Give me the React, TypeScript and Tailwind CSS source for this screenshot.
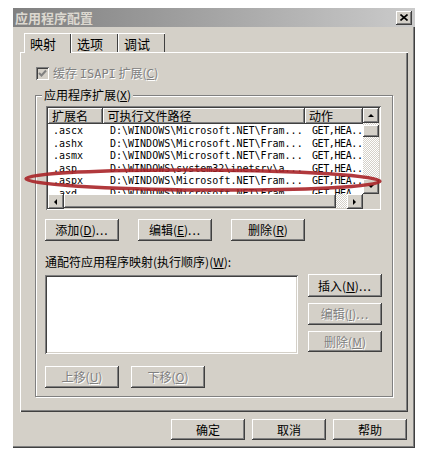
import React from "react";

const raised =
  "shadow-[inset_-1px_-1px_#404040,inset_1px_1px_#ffffff,inset_-2px_-2px_#808080,inset_2px_2px_#d4d0c8]";
const sunken =
  "shadow-[inset_1px_1px_#808080,inset_-1px_-1px_#ffffff,inset_2px_2px_#404040,inset_-2px_-2px_#d4d0c8]";
const cjk = "font-['SimSun','Noto_Sans_CJK_SC',sans-serif]";
const mono = "font-['DejaVu_Sans_Mono','Liberation_Mono',monospace]";
const checker =
  "bg-[repeating-conic-gradient(#ffffff_0_25%,#d4d0c8_0_50%)] bg-[length:2px_2px]";

const Key = ({ k }: { k: string }) => (
  <span>
    (<span className="underline underline-offset-1">{k}</span>)
  </span>
);

const Btn = ({ label, k, dots, disabled, className }: any) => (
  <div
    className={`flex items-center justify-center bg-[#d4d0c8] text-[12px] ${raised} ${
      disabled ? "text-[#808080] [text-shadow:1px_1px_#ffffff]" : "text-black"
    } ${className ?? "w-[74px] h-[22px]"}`}
  >
    {label}
    {k && <Key k={k} />}
    {dots && <span className="tracking-[1px]">...</span>}
  </div>
);

const Arrow = ({ dir }: { dir: "up" | "down" | "left" | "right" }) => {
  const pts = {
    up: "1,5 4,2 7,5",
    down: "1,2 4,5 7,2",
    left: "5,1 2,4 5,7",
    right: "2,1 5,4 2,7",
  }[dir];
  return (
    <div className={`flex items-center justify-center bg-[#d4d0c8] ${raised} w-[16px] h-[15px] shrink-0`}>
      <svg width="8" height="8" viewBox="0 0 8 8">
        <polygon points={pts} fill="#000" />
      </svg>
    </div>
  );
};

const rows = [
  [".ascx", "D:\\WINDOWS\\Microsoft.NET\\Fram...", "GET,HEA.."],
  [".ashx", "D:\\WINDOWS\\Microsoft.NET\\Fram...", "GET,HEA.."],
  [".asmx", "D:\\WINDOWS\\Microsoft.NET\\Fram...", "GET,HEA.."],
  [".asp", "D:\\WINDOWS\\system32\\inetsrv\\a...", "GET,HEA.."],
  [".aspx", "D:\\WINDOWS\\Microsoft.NET\\Fram...", "GET,HEA.."],
  [".axd", "D:\\WINDOWS\\Microsoft.NET\\Fram...", "GET,HEA.."],
];

export default function App() {
  return (
    <div className={`relative w-[431px] h-[460px] bg-white pt-[8px] pl-[13px] ${cjk}`}>
      <div className="w-[402px] h-[440px] bg-[#d4d0c8] flex flex-col shadow-[inset_-1px_-1px_#404040,inset_-2px_-2px_#808080]">
        {/* title bar */}
        <div className="h-[19px] flex items-center justify-between bg-linear-to-r from-[#808080] to-[#cbcbcb] pl-[2px] pr-[3px]">
          <span className="text-[13px] leading-[15px] font-bold text-[#dcd8d0]">应用程序配置</span>
          <div className={`w-[16px] h-[14px] flex items-center justify-center bg-[#d4d0c8] ${raised}`}>
            <svg width="8" height="7" viewBox="0 0 8 7">
              <path d="M0.5 0.5 L7.5 6.5 M7.5 0.5 L0.5 6.5" stroke="#000" strokeWidth="1.6" />
            </svg>
          </div>
        </div>

        {/* tabs */}
        <div className="mt-[6px] ml-[11px] flex h-[19px] text-[13px] leading-[15px] text-black">
          <div className="w-[47px] pl-[5px] pt-[2px] border-l border-t border-white shadow-[inset_-1px_0_#404040] bg-[#d4d0c8] relative z-10 h-[20px]">
            映射
          </div>
          <div className="w-[47px] pl-[5px] pt-[2px] border-l border-t border-white shadow-[inset_-1px_0_#404040]">选项</div>
          <div className="w-[47px] pl-[5px] pt-[2px] border-l border-t border-white shadow-[inset_-1px_0_#404040]">调试</div>
        </div>

        {/* panel */}
        <div className="ml-[7px] w-[388px] h-[360px] border-l border-t border-white shadow-[inset_-1px_-1px_#404040,inset_-2px_-2px_#808080] flex flex-col">
          <div className="mt-[14px] ml-[15px] flex items-center h-[13px]">
            <div className={`w-[13px] h-[13px] bg-[#d4d0c8] ${sunken} flex items-center justify-center`}>
              <svg width="9" height="9" viewBox="0 0 9 9">
                <path d="M1 4 L3.5 6.5 L8 1.5" stroke="#808080" strokeWidth="2" fill="none" />
              </svg>
            </div>
            <span className="ml-[4px] text-[12px] text-[#808080] [text-shadow:1px_1px_#ffffff]">
              缓存 <span className={mono}>ISAPI</span> 扩展<Key k="C" />
            </span>
          </div>

          {/* group box */}
          <div className="relative mt-[15px] ml-[14px] w-[358px] h-[302px] border border-[#808080] shadow-[inset_1px_1px_#ffffff,1px_1px_#ffffff] flex flex-col">
            <span className="absolute -top-[8px] left-[6px] bg-[#d4d0c8] px-[2px] text-[12px] leading-[14px] text-black">
              应用程序扩展<Key k="X" />
            </span>

            {/* list view */}
            <div className={`mt-[10px] ml-[10px] w-[335px] h-[104px] bg-white ${sunken} p-[2px] flex flex-col`}>
              <div className="flex h-[86px]">
                <div className="w-[315px] overflow-hidden flex flex-col">
                  <div className="flex h-[16px] text-[12px] leading-[16px] shrink-0">
                    <div className={`w-[56px] pl-[4px] bg-[#d4d0c8] ${raised}`}>扩展名</div>
                    <div className={`w-[204px] pl-[4px] bg-[#d4d0c8] ${raised}`}>可执行文件路径</div>
                    <div className={`w-[58px] pl-[4px] bg-[#d4d0c8] ${raised} shrink-0`}>动作</div>
                  </div>
                  <div className={`flex flex-col pt-[1px] text-[10px] text-black ${mono}`}>
                    {rows.map((r) => (
                      <div key={r[0]} className="flex h-[12.5px] leading-[12.5px] shrink-0 whitespace-nowrap">
                        <div className="w-[56px] pl-[5px]">{r[0]}</div>
                        <div className="w-[204px] pl-[6px]">{r[1]}</div>
                        <div className="w-[55px] pl-[4px] tracking-[-0.4px]">{r[2]}</div>
                      </div>
                    ))}
                  </div>
                </div>
                <div className={`w-[16px] flex flex-col ${checker}`}>
                  <Arrow dir="up" />
                  <div className={`mt-[2px] h-[12px] w-[16px] bg-[#d4d0c8] ${raised}`} />
                  <div className="flex-1" />
                  <Arrow dir="down" />
                </div>
              </div>
              <div className="flex h-[14px]">
                <div className={`flex flex-1 ${checker}`}>
                  <Arrow dir="left" />
                  <div className={`w-[272px] h-[14px] bg-[#d4d0c8] ${raised}`} />
                  <div className="flex-1" />
                  <Arrow dir="right" />
                </div>
                <div className="w-[16px] bg-[#d4d0c8]" />
              </div>
            </div>

            <div className="mt-[9px] ml-[9px] flex gap-[19px]">
              <Btn label="添加" k="D" dots />
              <Btn label="编辑" k="E" dots />
              <Btn label="删除" k="R" />
            </div>

            <div className="mt-[14px] ml-[9px] text-[12px] leading-[14px] text-black">
              通配符应用程序映射(执行顺序)<Key k="W" />:
            </div>

            <div className="mt-[6px] ml-[9px] flex gap-[10px]">
              <div className={`w-[253px] h-[79px] bg-white ${sunken}`} />
              <div className="flex flex-col gap-[6px] -mt-[1px]">
                <Btn label="插入" k="N" dots className="w-[74px] h-[23px]" />
                <Btn label="编辑" k="I" dots disabled />
                <Btn label="删除" k="M" disabled className="w-[74px] h-[21px]" />
              </div>
            </div>

            <div className="mt-[12px] ml-[9px] flex gap-[12px]">
              <Btn label="上移" k="U" disabled />
              <Btn label="下移" k="O" disabled />
            </div>
          </div>
        </div>

        {/* bottom buttons */}
        <div className="mt-[7px] mr-[8px] flex justify-end gap-[7px]">
          <Btn label="确定" className="w-[74px] h-[21px]" />
          <Btn label="取消" className="w-[74px] h-[21px]" />
          <Btn label="帮助" className="w-[74px] h-[21px]" />
        </div>
      </div>

      {/* red highlight ring */}
      <svg className="absolute left-[23px] top-[167px] pointer-events-none" width="360" height="26" viewBox="0 0 360 26">
        <ellipse cx="180" cy="13" rx="177" ry="10" fill="none" stroke="#a82328" strokeWidth="3.5" opacity="0.9" transform="rotate(0.4 180 13)" />
      </svg>
    </div>
  );
}
